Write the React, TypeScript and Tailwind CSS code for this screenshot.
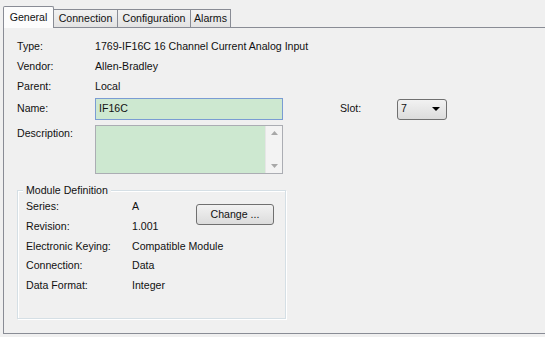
const font = "font-['Liberation_Sans',Arial,sans-serif]";

const info = [
    ["Type:", "1769-IF16C 16 Channel Current Analog Input"],
    ["Vendor:", "Allen-Bradley"],
    ["Parent:", "Local"],
];

const moduleRows = [
    ["Series:", "A"],
    ["Revision:", "1.001"],
    ["Electronic Keying:", "Compatible Module"],
    ["Connection:", "Data"],
    ["Data Format:", "Integer"],
];

function Tabs() {
    const others = [
        ["Connection", "w-[65px]"],
        ["Configuration", "w-[74px]"],
        ["Alarms", "w-[41px]"],
    ];
    return (
        <div className="flex items-end h-[27px] pl-[3px]">
            <div className="relative z-10 -mb-px w-[51px] h-[22px] bg-[#fcfcfc] border border-b-0 border-[#898c95] rounded-t-[2px] flex items-center justify-center">
                General
            </div>
            {others.map(([t, w]) => (
                <div
                    key={t}
                    className={`${w} h-[18px] -ml-px border border-b-0 border-[#898c95] bg-gradient-to-b from-[#f2f2f2] to-[#e3e3e3] flex items-center justify-center first:ml-0`}
                >
                    {t}
                </div>
            ))}
        </div>
    );
}

export default function App() {
    return (
        <div className={`w-[545px] h-[337px] bg-[#f0f0f0] text-[10.6px] text-[#111] overflow-hidden ${font}`}>
            <Tabs />
            <div className="ml-[3px] w-[560px] h-[307px] border border-[#898c95] bg-[#f0f0f0] pl-[13px] pt-[9px]">
                {info.map(([l, v]) => (
                    <div key={l} className="flex h-[20px] items-center">
                        <span className="w-[78px]">{l}</span>
                        <span>{v}</span>
                    </div>
                ))}
                <div className="flex h-[22px] items-center mt-px">
                    <span className="w-[78px]">Name:</span>
                    <div className="w-[188px] h-[22px] border border-[#7a9cd3] bg-[#cde8d0] px-[3px] flex items-center">
                        IF16C
                    </div>
                    <span className="ml-[57px] w-[57px]">Slot:</span>
                    <div className="w-[50px] h-[21px] border border-[#707070] rounded-[3px] bg-gradient-to-b from-[#f2f2f2] to-[#dcdcdc] flex items-center justify-between pl-[3px] pr-[6px]">
                        <span>7</span>
                        <svg width="8" height="4" viewBox="0 0 8 4">
                            <path d="M0 0h8L4 4z" fill="#000" />
                        </svg>
                    </div>
                </div>
                <div className="flex mt-[5px]">
                    <span className="w-[78px] pt-[1px]">Description:</span>
                    <div className="w-[188px] h-[49px] border border-[#abadb3] bg-[#cde8d0] flex justify-end">
                        <div className="w-[17px] h-full bg-[#f3f3f3] border-l border-[#e6e6e6] flex flex-col items-center justify-between py-[5px]">
                            <svg width="7" height="4" viewBox="0 0 7 4">
                                <path d="M0 4L3.5 0L7 4z" fill="#a8a8a8" />
                            </svg>
                            <svg width="7" height="4" viewBox="0 0 7 4">
                                <path d="M0 0h7L3.5 4z" fill="#a8a8a8" />
                            </svg>
                        </div>
                    </div>
                </div>
                <div className="relative mt-[16px] w-[269px] h-[129px] border border-[#d5dfe5] shadow-[inset_1px_1px_0_#fff,1px_1px_0_#fff] pl-[8px] pt-[6px]">
                    <span className="absolute -top-[8px] left-[5px] bg-[#f0f0f0] px-[3px] leading-[14px]">
                        Module Definition
                    </span>
                    <div className="flex">
                        <div>
                            {moduleRows.map(([l, v]) => (
                                <div key={l} className="flex h-[19.8px] items-center">
                                    <span className="w-[106px]">{l}</span>
                                    <span>{v}</span>
                                </div>
                            ))}
                        </div>
                        <button className="absolute left-[178px] top-[13px] w-[78px] h-[21px] border border-[#707070] rounded-[3px] bg-gradient-to-b from-[#f2f2f2] to-[#dcdcdc] flex items-center justify-center">
                            Change ...
                        </button>
                    </div>
                </div>
            </div>
        </div>
    );
}
